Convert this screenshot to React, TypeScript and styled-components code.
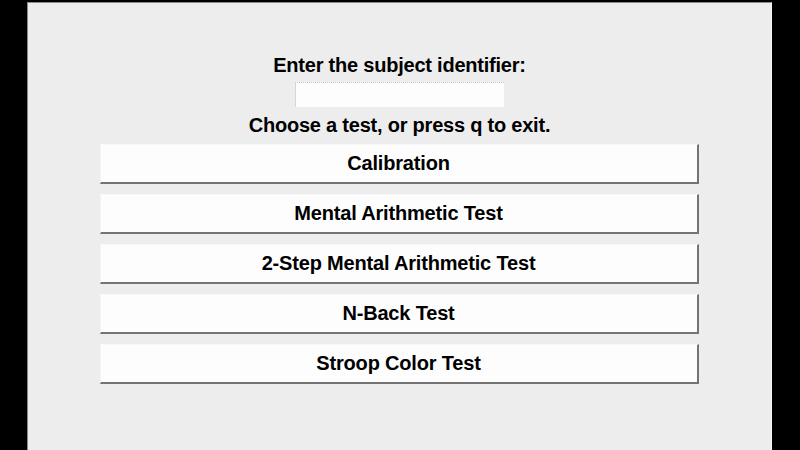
import styled, { createGlobalStyle } from 'styled-components';

const GlobalStyle = createGlobalStyle`
  html, body {
    margin: 0;
    padding: 0;
    background: #000;
    width: 800px;
    height: 450px;
    overflow: hidden;
  }
`;

const Screen = styled.div`
  width: 800px;
  height: 450px;
  background: #000;
  padding-top: 2px;
  box-sizing: border-box;
`;

const Window = styled.div`
  margin-left: 27px;
  width: 745px;
  height: 448px;
  box-sizing: border-box;
  background: #eeedee;
  border-top: 1px solid #8a8a8a;
  border-left: 1px solid #8a8a8a;
  border-right: 1px solid #f6f6f6;
  display: flex;
  flex-direction: column;
  align-items: center;
  padding-top: 50px;
  font-family: 'Liberation Sans', Arial, sans-serif;
  font-weight: bold;
  color: #000;
`;

const Label = styled.div`
  font-size: 20px;
  line-height: 24px;
  letter-spacing: -0.22px;
`;

const IdInput = styled.input`
  margin: 5px 0 6px;
  width: 209px;
  height: 25px;
  box-sizing: border-box;
  background: #fefdfe;
  border: none;
  border-top: 1px dotted #c8c8c8;
  border-left: 1px solid #d6d6d6;
  outline: none;
`;

const Menu = styled.div`
  display: flex;
  flex-direction: column;
  gap: 10px;
  margin-top: 7px;
  margin-left: -1px;
`;

const TestButton = styled.button`
  width: 599px;
  height: 40px;
  box-sizing: border-box;
  background: #fefdfe;
  border: none;
  border-top: 1px solid #f8f8f8;
  border-left: 1px solid #f4f4f4;
  border-right: 2px solid #747474;
  border-bottom: 2px solid #747474;
  font-family: 'Liberation Sans', Arial, sans-serif;
  font-weight: bold;
  font-size: 20px;
  letter-spacing: -0.18px;
  color: #000;
  padding: 0 0 1px;
  cursor: pointer;
`;

const tests = [
  'Calibration',
  'Mental Arithmetic Test',
  '2-Step Mental Arithmetic Test',
  'N-Back Test',
  'Stroop Color Test',
];

export default function App() {
  return (
    <Screen>
      <GlobalStyle />
      <Window>
        <Label>Enter the subject identifier:</Label>
        <IdInput type='text' />
        <Label>Choose a test, or press q to exit.</Label>
        <Menu>
          {tests.map((t) => (
            <TestButton key={t}>{t}</TestButton>
          ))}
        </Menu>
      </Window>
    </Screen>
  );
}
